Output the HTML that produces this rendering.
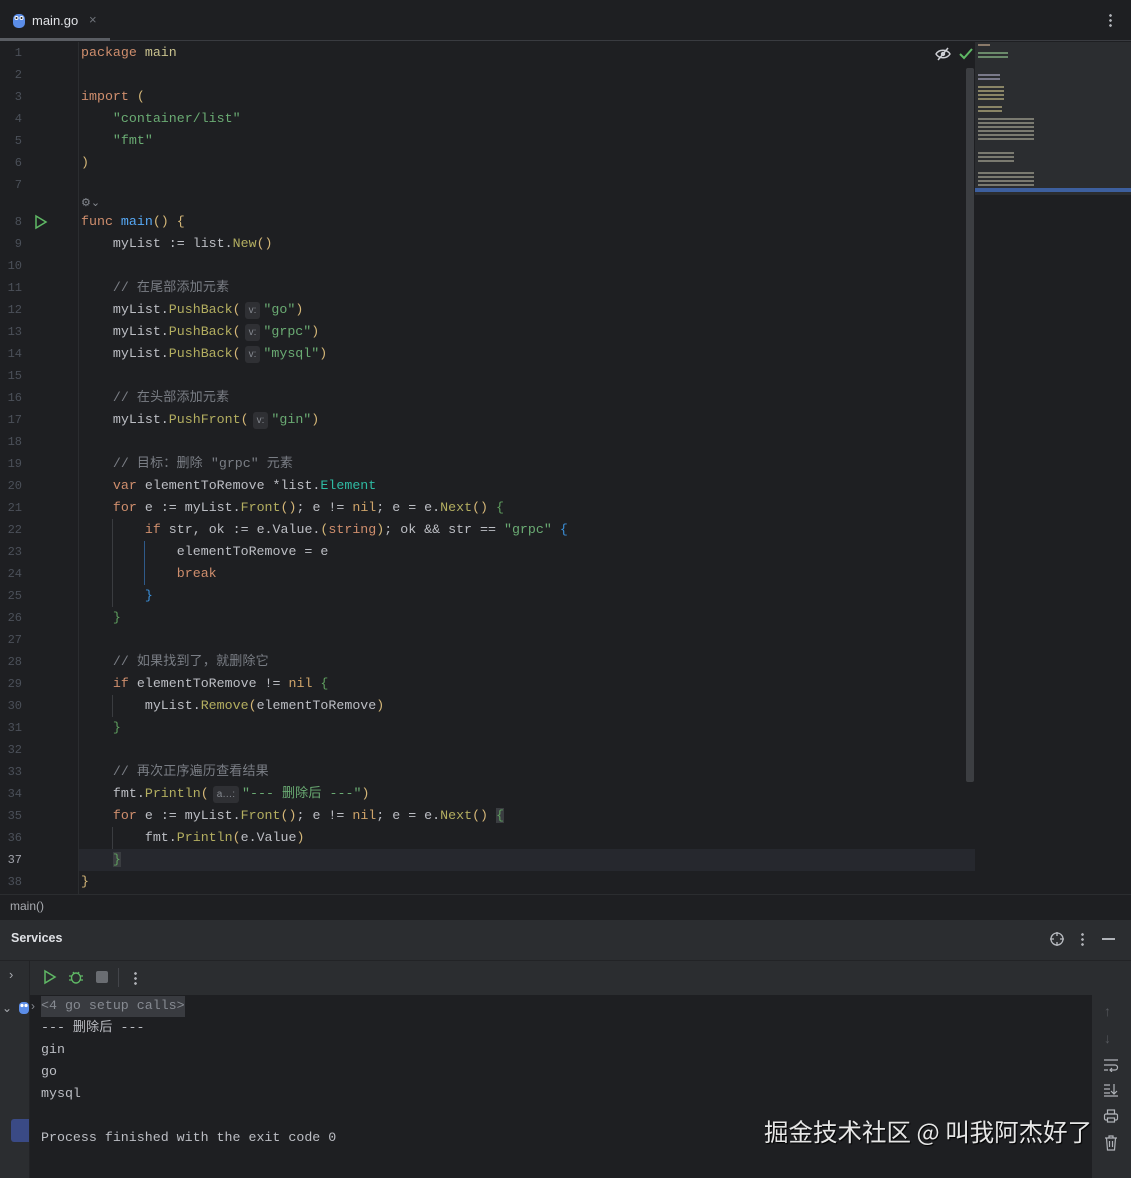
<!DOCTYPE html>
<html><head><meta charset="utf-8"><style>
*{margin:0;padding:0;box-sizing:border-box}
body{width:1131px;height:1178px;background:#1e1f22;position:relative;overflow:hidden;font-family:"Liberation Sans","Noto Sans CJK SC",sans-serif;color:#bcbec4}
.a{position:absolute}
.ln{position:absolute;left:0;width:22px;text-align:right;font:12px/22px "Liberation Mono",monospace;color:#4b5059}
.cl{position:absolute;left:81px;height:22px;font:13.3px/22px "Liberation Mono","Noto Sans CJK SC",monospace;color:#bcbec4;white-space:pre}
.k{color:#cf8e6d}.s{color:#6aab73}.f{color:#b3ae60}.c{color:#7a7e85}.p{color:#d5b778}.fn{color:#56a8f5}.ty{color:#2fbaa3}.g{color:#5f9f5f}.b{color:#3b8fd9}.nl{color:#cfa46a}
.cj{font-family:"Noto Sans CJK SC",sans-serif;font-size:13px;letter-spacing:0.2px;line-height:0}
.h{display:inline-block;background:#2f3034;color:#868a91;font:10px/17px "Liberation Sans",sans-serif;border-radius:3px;padding:0 4px;margin:0 3px 0 4px;vertical-align:0;height:17px}
.con{position:absolute;left:41px;height:22px;font:13.3px/22px "Liberation Mono","Noto Sans CJK SC",monospace;color:#bcbec4;white-space:pre}
</style></head><body>
<div class="a" style="left:0;top:0;width:1131px;height:41px;background:#1e1f22;border-bottom:1px solid #393b40"></div>
<div class="a" style="left:0;top:38px;width:110px;height:3px;background:#5a5d63"></div>
<svg class="a" style="left:12px;top:13px" width="14" height="16" viewBox="0 0 14 16"><rect x="1" y="1" width="12" height="14" rx="5" fill="#5b8de8"/><circle cx="4.5" cy="5" r="2" fill="#fff"/><circle cx="9.5" cy="5" r="2" fill="#fff"/><circle cx="4.5" cy="5" r="1" fill="#222"/><circle cx="9.5" cy="5" r="1" fill="#222"/></svg>
<div class="a" style="left:32px;top:13px;font-size:13px;color:#dfe1e5">main.go</div>
<div class="a" style="left:89px;top:12px;font-size:13px;color:#6f737a">×</div>
<div class="a" style="left:1109px;top:13px;width:3px;height:14px;background:radial-gradient(circle,#b0b3b8 1.2px,transparent 1.5px) 0 0/3px 5px"></div>
<div class="a" style="left:78px;top:42px;width:1px;height:852px;background:#2b2d30"></div>
<div class="a" style="left:79px;top:849px;width:896px;height:22px;background:#26282e"></div>
<div class="a" style="left:966px;top:68px;width:8px;height:714px;background:#3c3e42;border-radius:2px"></div>
<div class="a" style="left:975px;top:42px;width:156px;height:153px;background:#2b2d30"></div>
<div class="a" style="left:975px;top:188px;width:156px;height:4px;background:#3d5f9e"></div>
<div class="a" style="left:978px;top:44px;width:12px;height:2px;background:#8a7a6a"></div>
<div class="a" style="left:978px;top:52px;width:30px;height:12px;background:linear-gradient(#6a8a6a 0 2px,transparent 2px 4px,#6a8a6a 4px 6px,transparent 6px)"></div>
<div class="a" style="left:978px;top:74px;width:22px;height:6px;background:repeating-linear-gradient(#7a7a8a 0 2px,transparent 2px 4px)"></div>
<div class="a" style="left:978px;top:86px;width:26px;height:16px;background:repeating-linear-gradient(#8a8566 0 2px,transparent 2px 4px)"></div>
<div class="a" style="left:978px;top:106px;width:24px;height:6px;background:repeating-linear-gradient(#8a8566 0 2px,transparent 2px 4px)"></div>
<div class="a" style="left:978px;top:118px;width:56px;height:22px;background:repeating-linear-gradient(#7a7a70 0 2px,transparent 2px 4px)"></div>
<div class="a" style="left:978px;top:152px;width:36px;height:12px;background:repeating-linear-gradient(#7a7a70 0 2px,transparent 2px 4px)"></div>
<div class="a" style="left:978px;top:172px;width:56px;height:14px;background:repeating-linear-gradient(#7a7a70 0 2px,transparent 2px 4px)"></div>
<svg class="a" style="left:935px;top:47px" width="16" height="14" viewBox="0 0 16 14"><path d="M1 7 C4 2 12 2 15 7 C12 12 4 12 1 7Z" fill="none" stroke="#ced0d6" stroke-width="1.4"/><circle cx="8" cy="7" r="2.2" fill="#ced0d6"/><path d="M3 13 L13 1" stroke="#ced0d6" stroke-width="1.5"/></svg>
<svg class="a" style="left:959px;top:48px" width="14" height="12" viewBox="0 0 14 12"><path d="M1 6 L5 10 L13 1" fill="none" stroke="#5fb865" stroke-width="2"/></svg>
<div class="a" style="left:112px;top:519px;width:1px;height:88px;background:#3a3c40"></div>
<div class="a" style="left:144px;top:541px;width:1px;height:44px;background:#2f5a8a"></div>
<div class="a" style="left:112px;top:695px;width:1px;height:22px;background:#3a3c40"></div>
<div class="a" style="left:112px;top:827px;width:1px;height:22px;background:#3a3c40"></div>
<svg class="a" style="left:34px;top:214px" width="14" height="16" viewBox="0 0 14 16"><path d="M2 2 L12 8 L2 14Z" fill="none" stroke="#5fb865" stroke-width="1.5"/></svg>
<div class="a" style="left:81px;top:196px;font-size:11px;color:#868a91">⚙⌄</div>

<div class="ln" style="top:42px">1</div><div class="cl" style="top:42px"><span class="k">package</span> <span style="color:#c9c28e">main</span></div>
<div class="ln" style="top:64px">2</div>
<div class="ln" style="top:86px">3</div><div class="cl" style="top:86px"><span class="k">import</span> <span class="p">(</span></div>
<div class="ln" style="top:108px">4</div><div class="cl" style="top:108px">    <span class="s">"container/list"</span></div>
<div class="ln" style="top:130px">5</div><div class="cl" style="top:130px">    <span class="s">"fmt"</span></div>
<div class="ln" style="top:152px">6</div><div class="cl" style="top:152px"><span class="p">)</span></div>
<div class="ln" style="top:174px">7</div>
<div class="ln" style="top:211px">8</div><div class="cl" style="top:211px"><span class="k">func</span> <span class="fn">main</span><span class="p">()</span> <span class="p">{</span></div>
<div class="ln" style="top:233px">9</div><div class="cl" style="top:233px">    myList := list.<span class="f">New</span><span class="p">()</span></div>
<div class="ln" style="top:255px">10</div>
<div class="ln" style="top:277px">11</div><div class="cl" style="top:277px">    <span class="c">// <span class="cj">在尾部添加元素</span></span></div>
<div class="ln" style="top:299px">12</div><div class="cl" style="top:299px">    myList.<span class="f">PushBack</span><span class="p">(</span><span class="h">v:</span><span class="s">"go"</span><span class="p">)</span></div>
<div class="ln" style="top:321px">13</div><div class="cl" style="top:321px">    myList.<span class="f">PushBack</span><span class="p">(</span><span class="h">v:</span><span class="s">"grpc"</span><span class="p">)</span></div>
<div class="ln" style="top:343px">14</div><div class="cl" style="top:343px">    myList.<span class="f">PushBack</span><span class="p">(</span><span class="h">v:</span><span class="s">"mysql"</span><span class="p">)</span></div>
<div class="ln" style="top:365px">15</div>
<div class="ln" style="top:387px">16</div><div class="cl" style="top:387px">    <span class="c">// <span class="cj">在头部添加元素</span></span></div>
<div class="ln" style="top:409px">17</div><div class="cl" style="top:409px">    myList.<span class="f">PushFront</span><span class="p">(</span><span class="h">v:</span><span class="s">"gin"</span><span class="p">)</span></div>
<div class="ln" style="top:431px">18</div>
<div class="ln" style="top:453px">19</div><div class="cl" style="top:453px">    <span class="c">// <span class="cj">目标：删除</span> "grpc" <span class="cj">元素</span></span></div>
<div class="ln" style="top:475px">20</div><div class="cl" style="top:475px">    <span class="k">var</span> elementToRemove *list.<span class="ty">Element</span></div>
<div class="ln" style="top:497px">21</div><div class="cl" style="top:497px">    <span class="k">for</span> e := myList.<span class="f">Front</span><span class="p">()</span>; e != <span class="nl">nil</span>; e = e.<span class="f">Next</span><span class="p">()</span> <span class="g">{</span></div>
<div class="ln" style="top:519px">22</div><div class="cl" style="top:519px">        <span class="k">if</span> str, ok := e.Value.<span class="p">(</span><span class="k">string</span><span class="p">)</span>; ok &amp;&amp; str == <span class="s">"grpc"</span> <span class="b">{</span></div>
<div class="ln" style="top:541px">23</div><div class="cl" style="top:541px">            elementToRemove = e</div>
<div class="ln" style="top:563px">24</div><div class="cl" style="top:563px">            <span class="k">break</span></div>
<div class="ln" style="top:585px">25</div><div class="cl" style="top:585px">        <span class="b">}</span></div>
<div class="ln" style="top:607px">26</div><div class="cl" style="top:607px">    <span class="g">}</span></div>
<div class="ln" style="top:629px">27</div>
<div class="ln" style="top:651px">28</div><div class="cl" style="top:651px">    <span class="c">// <span class="cj">如果找到了，就删除它</span></span></div>
<div class="ln" style="top:673px">29</div><div class="cl" style="top:673px">    <span class="k">if</span> elementToRemove != <span class="nl">nil</span> <span class="g">{</span></div>
<div class="ln" style="top:695px">30</div><div class="cl" style="top:695px">        myList.<span class="f">Remove</span><span class="p">(</span>elementToRemove<span class="p">)</span></div>
<div class="ln" style="top:717px">31</div><div class="cl" style="top:717px">    <span class="g">}</span></div>
<div class="ln" style="top:739px">32</div>
<div class="ln" style="top:761px">33</div><div class="cl" style="top:761px">    <span class="c">// <span class="cj">再次正序遍历查看结果</span></span></div>
<div class="ln" style="top:783px">34</div><div class="cl" style="top:783px">    fmt.<span class="f">Println</span><span class="p">(</span><span class="h">a…:</span><span class="s">"--- <span class="cj">删除后</span> ---"</span><span class="p">)</span></div>
<div class="ln" style="top:805px">35</div><div class="cl" style="top:805px">    <span class="k">for</span> e := myList.<span class="f">Front</span><span class="p">()</span>; e != <span class="nl">nil</span>; e = e.<span class="f">Next</span><span class="p">()</span> <span class="g" style="background:#3a3d41">{</span></div>
<div class="ln" style="top:827px">36</div><div class="cl" style="top:827px">        fmt.<span class="f">Println</span><span class="p">(</span>e.Value<span class="p">)</span></div>
<div class="ln" style="top:849px;color:#a1a3ab">37</div><div class="cl" style="top:849px">    <span class="g" style="background:#3a3d41">}</span></div>
<div class="ln" style="top:871px">38</div><div class="cl" style="top:871px"><span class="p">}</span></div>

<div class="a" style="left:0;top:894px;width:1131px;height:25px;background:#1e1f22;border-top:1px solid #2b2d30"></div>
<div class="a" style="left:10px;top:899px;font-size:12px;color:#a8abb0">main()</div>
<div class="a" style="left:0;top:919px;width:1131px;height:41px;background:#2b2d30;border-top:1px solid #1e1f22"></div>
<div class="a" style="left:11px;top:931px;font-size:12.5px;font-weight:bold;color:#dfe1e5">Services</div>
<svg class="a" style="left:1049px;top:931px" width="16" height="16" viewBox="0 0 16 16"><circle cx="8" cy="8" r="6" fill="none" stroke="#b8bbc0" stroke-width="1.3"/><path d="M8 1v4M8 11v4M1 8h4M11 8h4" stroke="#b8bbc0" stroke-width="1.3"/></svg>
<div class="a" style="left:1081px;top:932px;width:3px;height:14px;background:radial-gradient(circle,#b0b3b8 1.2px,transparent 1.5px) 0 0/3px 5px"></div>
<div class="a" style="left:1102px;top:938px;width:13px;height:1.5px;background:#b0b3b8"></div>
<div class="a" style="left:0;top:960px;width:1131px;height:35px;background:#2b2d30;border-top:1px solid #222326"></div>
<div class="a" style="left:29px;top:960px;width:1px;height:218px;background:#222326"></div>
<div class="a" style="left:9px;top:967px;font-size:13px;color:#a8abb0">›</div>
<svg class="a" style="left:43px;top:969px" width="14" height="16" viewBox="0 0 14 16"><path d="M2 2 L12 8 L2 14Z" fill="none" stroke="#5fb865" stroke-width="1.5"/></svg>
<svg class="a" style="left:67px;top:968px" width="18" height="18" viewBox="0 0 18 18"><ellipse cx="9" cy="10" rx="4.5" ry="5" fill="none" stroke="#5fb865" stroke-width="1.4"/><path d="M2 8h3M13 8h3M2 12h3M13 12h3M6 4l1.5 2M12 4l-1.5 2" stroke="#5fb865" stroke-width="1.3"/></svg>
<div class="a" style="left:96px;top:971px;width:12px;height:12px;background:#6a6d72;border-radius:2px"></div>
<div class="a" style="left:118px;top:968px;width:1px;height:19px;background:#43454a"></div>
<div class="a" style="left:134px;top:971px;width:3px;height:14px;background:radial-gradient(circle,#b0b3b8 1.2px,transparent 1.5px) 0 0/3px 5px"></div>
<div class="a" style="left:0;top:995px;width:29px;height:183px;background:#2b2d30"></div>
<div class="a" style="left:2px;top:1001px;font-size:12px;color:#a8abb0">⌄</div>
<svg class="a" style="left:19px;top:1001px" width="10" height="14" viewBox="0 0 10 14"><rect x="0" y="1" width="10" height="12" rx="4" fill="#5b8de8"/><circle cx="3" cy="4.5" r="1.6" fill="#fff"/><circle cx="7" cy="4.5" r="1.6" fill="#fff"/></svg>
<div class="a" style="left:11px;top:1119px;width:18px;height:23px;background:#3a4a85;border-radius:3px 0 0 3px"></div>
<div class="a" style="left:31px;top:999px;font-size:12px;color:#868a91">›</div>
<div class="a" style="left:1092px;top:995px;width:39px;height:183px;background:#2b2d30"></div>
<div class="a" style="left:1104px;top:1003px;font-size:14px;color:#55585d">↑</div>
<div class="a" style="left:1104px;top:1030px;font-size:14px;color:#55585d">↓</div>
<svg class="a" style="left:1103px;top:1058px" width="16" height="14" viewBox="0 0 16 14"><path d="M1 2h14M1 7h11a2.5 2.5 0 0 1 0 5H8M1 12h4M9 10l-2 2 2 2" fill="none" stroke="#b0b3b8" stroke-width="1.2"/></svg>
<svg class="a" style="left:1103px;top:1083px" width="16" height="14" viewBox="0 0 16 14"><path d="M1 2h6M1 6h6M1 10h6M1 13h14M11 1v10M8 8l3 3 3-3" fill="none" stroke="#b0b3b8" stroke-width="1.2"/></svg>
<svg class="a" style="left:1103px;top:1109px" width="16" height="14" viewBox="0 0 16 14"><rect x="1.5" y="5" width="13" height="6" rx="1.5" fill="none" stroke="#b0b3b8" stroke-width="1.2"/><rect x="4.5" y="1" width="7" height="4" fill="none" stroke="#b0b3b8" stroke-width="1.2"/><rect x="4.5" y="9" width="7" height="4" fill="#2b2d30" stroke="#b0b3b8" stroke-width="1.2"/></svg>
<svg class="a" style="left:1104px;top:1135px" width="14" height="16" viewBox="0 0 14 16"><path d="M1 3h12M5 3V1h4v2M2.5 3l1 12h7l1-12M5.5 6v6M8.5 6v6" fill="none" stroke="#b0b3b8" stroke-width="1.2"/></svg>
<div class="a" style="left:41px;top:996px;width:144px;height:21px;background:#393b40"></div>
<div class="con" style="top:995px;color:#868a91">&lt;4 go setup calls&gt;</div>
<div class="con" style="top:1017px">--- <span class="cj">删除后</span> ---</div>
<div class="con" style="top:1039px">gin</div>
<div class="con" style="top:1061px">go</div>
<div class="con" style="top:1083px">mysql</div>
<div class="con" style="top:1127px">Process finished with the exit code 0</div>
<div class="a" style="left:764px;top:1115px;font-family:'Noto Sans CJK SC',sans-serif;font-size:24.5px;line-height:34px;color:#e6e6e6;text-shadow:1px 1px 1px #000;white-space:nowrap">掘金技术社区 @ 叫我阿杰好了</div>
</body></html>
